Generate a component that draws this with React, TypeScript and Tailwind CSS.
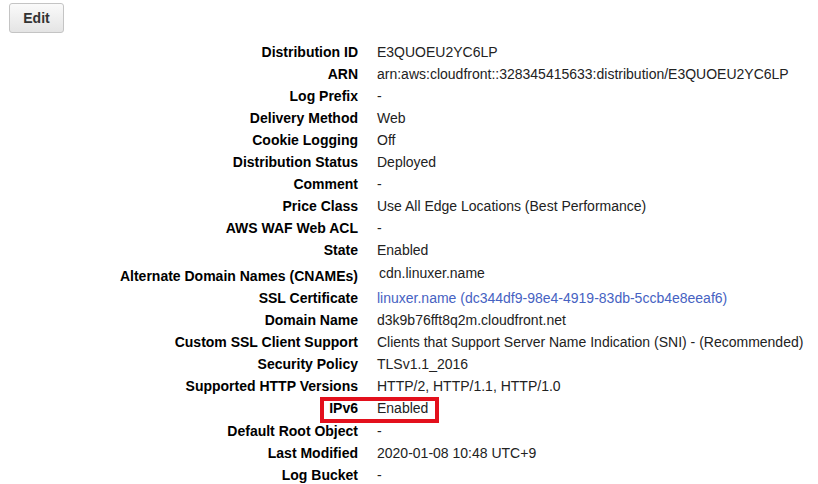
const rows: { label: string; value: string; kind?: 'link' | 'cname' | 'ipv6' }[] = [
  { label: 'Distribution ID', value: 'E3QUOEU2YC6LP' },
  { label: 'ARN', value: 'arn:aws:cloudfront::328345415633:distribution/E3QUOEU2YC6LP' },
  { label: 'Log Prefix', value: '-' },
  { label: 'Delivery Method', value: 'Web' },
  { label: 'Cookie Logging', value: 'Off' },
  { label: 'Distribution Status', value: 'Deployed' },
  { label: 'Comment', value: '-' },
  { label: 'Price Class', value: 'Use All Edge Locations (Best Performance)' },
  { label: 'AWS WAF Web ACL', value: '-' },
  { label: 'State', value: 'Enabled' },
  { label: 'Alternate Domain Names (CNAMEs)', value: 'cdn.linuxer.name', kind: 'cname' },
  { label: 'SSL Certificate', value: 'linuxer.name (dc344df9-98e4-4919-83db-5ccb4e8eeaf6)', kind: 'link' },
  { label: 'Domain Name', value: 'd3k9b76fft8q2m.cloudfront.net' },
  { label: 'Custom SSL Client Support', value: 'Clients that Support Server Name Indication (SNI) - (Recommended)' },
  { label: 'Security Policy', value: 'TLSv1.1_2016' },
  { label: 'Supported HTTP Versions', value: 'HTTP/2, HTTP/1.1, HTTP/1.0' },
  { label: 'IPv6', value: 'Enabled', kind: 'ipv6' },
  { label: 'Default Root Object', value: '-' },
  { label: 'Last Modified', value: '2020-01-08 10:48 UTC+9' },
  { label: 'Log Bucket', value: '-' },
];

export default function App() {
  return (
    <div className="h-[484px] w-[818px] overflow-hidden bg-white font-['Liberation_Sans',Arial,sans-serif] text-[14px] text-[#222]">
      <div className="pl-[9px] pt-[3px]">
        <button className="h-[30px] w-[55px] rounded-[3px] border border-[#c4c4c4] bg-gradient-to-b from-[#fafafa] to-[#e4e4e4] text-[14px] font-bold text-[#333]">
          Edit
        </button>
      </div>
      <div className="mt-[8px]">
        {rows.map(({ label, value, kind }) => (
          <div
            key={label}
            className={`relative flex leading-[22px] ${kind === 'cname' ? 'h-[26px]' : kind === 'ipv6' ? 'h-[23px]' : 'h-[22px]'}`}
          >
            <div className={`w-[358px] shrink-0 text-right font-bold text-black ${kind === 'cname' ? 'pt-[4px]' : ''}`}>
              {label}
            </div>
            <div className={kind === 'cname' ? 'pl-[21px] pt-[1px]' : 'pl-[19px]'}>
              {kind === 'link' ? <span className="text-[#4662c2]">{value}</span> : value}
            </div>
            {kind === 'ipv6' && (
              <div className="absolute left-[320px] top-0 h-[26px] w-[119px] border-4 border-[#e3101c]" />
            )}
          </div>
        ))}
      </div>
    </div>
  );
}
